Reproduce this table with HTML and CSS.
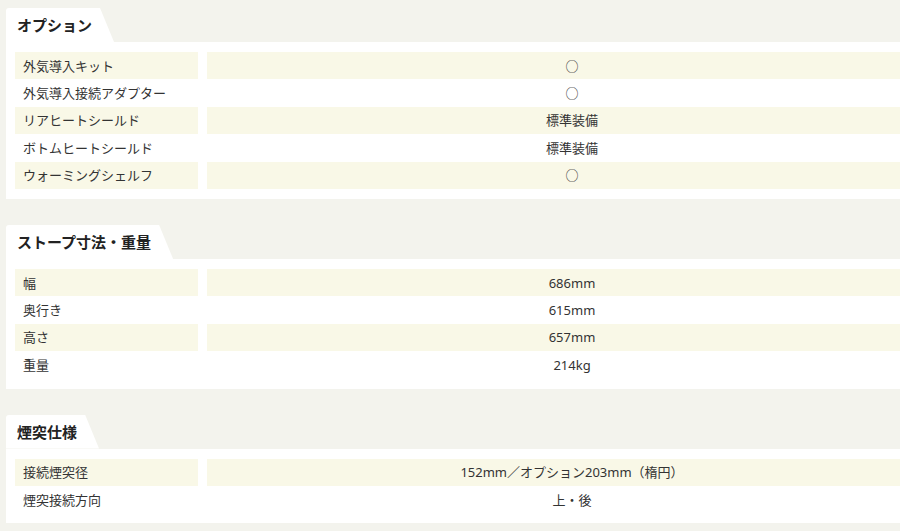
FILE: index.html
```html
<!DOCTYPE html>
<html lang="ja">
<head>
<meta charset="utf-8">
<title>仕様</title>
<link rel="stylesheet" href="styles.css">
</head>
<body>
<div class="page">
  <section class="spec">
    <h2 class="spec-tab">オプション</h2>
    <div class="spec-body">
      <table class="spec-table">
        <tr><th>外気導入キット</th><td>○</td></tr>
        <tr><th>外気導入接続アダプター</th><td>○</td></tr>
        <tr><th>リアヒートシールド</th><td>標準装備</td></tr>
        <tr><th>ボトムヒートシールド</th><td>標準装備</td></tr>
        <tr><th>ウォーミングシェルフ</th><td>○</td></tr>
      </table>
    </div>
  </section>
  <section class="spec">
    <h2 class="spec-tab">ストープ寸法・重量</h2>
    <div class="spec-body">
      <table class="spec-table">
        <tr><th>幅</th><td>686mm</td></tr>
        <tr><th>奥行き</th><td>615mm</td></tr>
        <tr><th>高さ</th><td>657mm</td></tr>
        <tr><th>重量</th><td>214kg</td></tr>
      </table>
    </div>
  </section>
  <section class="spec">
    <h2 class="spec-tab">煙突仕様</h2>
    <div class="spec-body">
      <table class="spec-table">
        <tr><th>接続煙突径</th><td>152mm／オプション203mm（楕円）</td></tr>
        <tr><th>煙突接続方向</th><td>上・後</td></tr>
      </table>
    </div>
  </section>
</div>
</body>
</html>
```
FILE: styles.css
```css
html, body {
  margin: 0;
  padding: 0;
  overflow: hidden;
  background: #f3f3ed;
}
body {
  font-family: "Noto Sans CJK JP", "Noto Sans", sans-serif;
  color: #333;
}
.page {
  width: 940px;
  padding: 8px 0 0 6px;
}
.spec {
  margin-bottom: 26px;
}
.spec-tab {
  display: inline-block;
  margin: 0;
  height: 34px;
  line-height: 34px;
  padding: 0 22px 0 11px;
  font-size: 15px;
  font-weight: 700;
  color: #222;
  background: #fff;
  border-top-left-radius: 3px;
  clip-path: polygon(0 0, calc(100% - 14px) 0, 100% 100%, 0 100%);
  vertical-align: top;
}
.spec-body {
  background: #fff;
  padding: 10px 0 10px;
}
.spec-table {
  width: 100%;
  border-collapse: separate;
  border-spacing: 9px 0;
  font-family: "Noto Sans", "Noto Sans CJK JP", sans-serif;
  font-size: 13px;
}
.spec-table th,
.spec-table td {
  height: 27.4px;
  padding: 0;
  font-weight: 400;
  line-height: 18px;
  color: #333;
}
.spec-table th {
  width: 175px;
  padding-left: 8px;
  text-align: left;
}
.spec-table td {
  text-align: center;
}
.spec-table tr:nth-child(odd) th,
.spec-table tr:nth-child(odd) td {
  background: #f9f8e7;
}
```
